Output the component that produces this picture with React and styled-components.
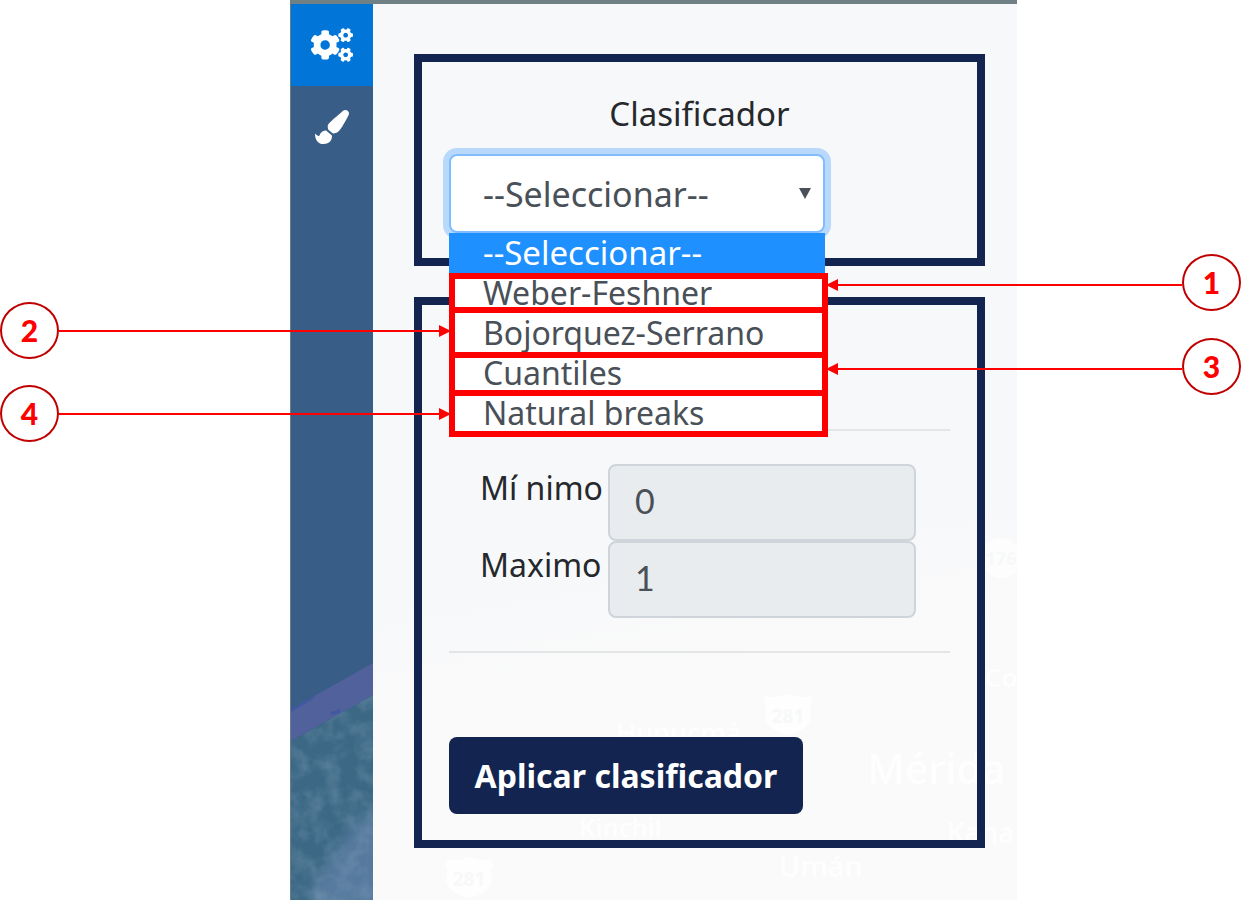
import React from "react";
import styled, { createGlobalStyle } from "styled-components";
import { FaCogs, FaPaintBrush } from "react-icons/fa";

const navy = "#12244f";
const red = "#ff0000";

const GlobalStyle = createGlobalStyle`
  *, *::before, *::after { box-sizing: border-box; }
  body { margin: 0; background: #fff; font-family: "Noto Sans", "Open Sans", sans-serif; }
`;

const Page = styled.div`
  position: relative;
  display: grid;
  grid-template-columns: 290px minmax(0, 1fr) 224px;
  min-height: 100vh;
`;

const AppFrame = styled.div`
  grid-column: 2;
  display: flex;
  min-width: 570px;
  border-top: 4px solid #6f8184;
  border-left: 1px solid #66808a;
`;

const Sidebar = styled.nav`
  position: relative;
  flex: 0 0 82px;
  background: #385d86;
  overflow: hidden;
`;

const SidebarMap = styled.svg`
  position: absolute;
  left: 0;
  bottom: 0;
  width: 82px;
  height: 260px;
`;

const Tab = styled.button`
  display: flex;
  align-items: center;
  justify-content: center;
  width: 100%;
  height: 82px;
  padding: 0;
  border: 0;
  border-top-left-radius: 3px;
  color: #fff;
  background: ${(p) => (p.$active ? "#0275d8" : "transparent")};
  font-size: 34px;
  cursor: pointer;
`;

const Content = styled.main`
  position: relative;
  flex: 1;
  display: flex;
  flex-direction: column;
  gap: 31px;
  padding: 50px 32px 52px 41px;
  background: linear-gradient(170deg, #f7f8fa 60%, #fafafa 72%);
`;

const ContentMap = styled.svg`
  position: absolute;
  right: 0;
  bottom: 0;
  width: 644px;
  height: 500px;
`;

const Card = styled.section`
  position: relative;
  z-index: ${(p) => (p.$raised ? 2 : 1)};
  padding: ${(p) => (p.$raised ? "28px 27px 25px" : "124px 27px 26px")};
  border: 8px solid ${navy};
`;

const CardLabel = styled.label`
  display: block;
  margin-bottom: 16px;
  color: #25282c;
  font-size: 33px;
  line-height: 48px;
  text-align: center;
`;

const SelectField = styled.div`
  position: relative;
  width: 376px;
`;

const Select = styled.select`
  display: block;
  width: 100%;
  height: 79px;
  padding: 0 32px;
  border: 2px solid #80bdff;
  border-radius: 8px;
  outline: none;
  box-shadow: 0 0 0 6px #b8d9fc;
  appearance: none;
  background: #fff;
  color: #495057;
  font-family: inherit;
  font-size: 34px;
`;

const Caret = styled.svg`
  position: absolute;
  top: 34px;
  right: 14px;
  width: 12px;
  height: 11px;
  pointer-events: none;
`;

const Menu = styled.ul`
  position: absolute;
  top: 100%;
  left: 0;
  width: 100%;
  margin: 0;
  padding: 0;
  background: #fff;
  list-style: none;
`;

const Option = styled.li`
  height: 40px;
  padding-left: 34px;
  background: ${(p) => (p.$selected ? "#1e90ff" : "#fff")};
  color: ${(p) => (p.$selected ? "#fff" : "#495057")};
  font-size: ${(p) => (p.$selected ? 33 : 32)}px;
  line-height: 40px;
  white-space: nowrap;
`;

const Marks = styled.div`
  position: absolute;
  top: 119px;
  left: 0;
  width: 379px;
  display: flex;
  flex-direction: column;
  pointer-events: none;
`;

const Mark = styled.div`
  height: ${(p) => p.$height}px;
  border: 6px solid ${red};

  & + & { margin-top: -6px; }
`;

const Divider = styled.hr`
  height: 2px;
  margin: 0;
  border: 0;
  background: #e3e5e6;
`;

const Fields = styled.div`
  display: flex;
  flex-direction: column;
  padding: 33px 34px 33px 31px;
`;

const FieldRow = styled.div`
  display: grid;
  grid-template-columns: 121px minmax(0, 1fr);
  gap: 7px;
`;

const FieldLabel = styled.label`
  color: #25282c;
  font-size: 32px;
  line-height: 48px;
  text-align: right;
  white-space: nowrap;
`;

const Input = styled.input`
  width: 100%;
  height: 77px;
  padding: 0 25px 4px;
  border: 2px solid #ced4da;
  border-radius: 8px;
  background: #e8ecee;
  color: #495057;
  font-family: Lato, sans-serif;
  font-size: 34px;
`;

const ApplyButton = styled.button`
  display: block;
  width: 354px;
  height: 77px;
  margin-top: 84px;
  padding: 0;
  border: 0;
  border-radius: 8px;
  background: ${navy};
  color: #fff;
  font-family: inherit;
  font-size: 32px;
  font-weight: 700;
  white-space: nowrap;
  cursor: pointer;
`;

const Callout = styled.div`
  position: absolute;
  z-index: 5;
  top: ${(p) => p.$top}px;
  ${(p) => (p.$side === "left" ? "left: 0; width: 451px;" : "left: 826px; right: 0;")}
  display: flex;
  flex-direction: ${(p) => (p.$side === "left" ? "row" : "row-reverse")};
  align-items: center;
  pointer-events: none;
`;

const Badge = styled.span`
  flex: none;
  width: 59px;
  height: 57px;
  border: 2px solid #c00000;
  border-radius: 50%;
  background: #fff;
  color: ${red};
  font-family: Lato, sans-serif;
  font-size: 30px;
  font-weight: 900;
  line-height: 53px;
  text-align: center;
`;

const Line = styled.span`
  flex: 1;
  height: 2px;
  margin-top: ${(p) => (p.$side === "left" ? 0 : 4)}px;
  background: ${red};
`;

const Head = styled.span`
  flex: none;
  margin-top: ${(p) => (p.$side === "left" ? 0 : 4)}px;
  border: 6px solid transparent;
  ${(p) =>
    p.$side === "left"
      ? `border-left: 12px solid ${red}; border-right: 0;`
      : `border-right: 12px solid ${red}; border-left: 0;`}
`;

const options = ["--Seleccionar--", "Weber-Feshner", "Bojorquez-Serrano", "Cuantiles", "Natural breaks"];
const markHeights = [40, 51, 44, 47];
const callouts = [
  { n: 1, side: "right", top: 254 },
  { n: 2, side: "left", top: 302 },
  { n: 3, side: "right", top: 338 },
  { n: 4, side: "left", top: 385 },
];

function SidebarTerrain() {
  return (
    <SidebarMap viewBox="0 0 82 260" aria-hidden="true">
      <defs>
        <filter id="soft"><feGaussianBlur stdDeviation="7" /></filter>
        <filter id="grain" x="0" y="0" width="100%" height="100%">
          <feTurbulence type="fractalNoise" baseFrequency="0.06" numOctaves="3" seed="4" />
          <feColorMatrix values="0 0 0 0 0.40  0 0 0 0 0.54  0 0 0 0 0.68  1.6 0 0 0 -0.6" />
        </filter>
        <clipPath id="land"><path d="M0 101 L82 55 V260 H0 Z" /></clipPath>
      </defs>
      <g clipPath="url(#land)">
        <rect width="82" height="260" fill="#3c6885" />
        <path d="M90 165 L60 190 L18 255 L30 270 H90 Z" fill="#567a9e" filter="url(#soft)" />
        <rect width="82" height="260" filter="url(#grain)" opacity="0.3" />
      </g>
      <path d="M0 69 L82 23 V55 L0 101 Z" fill="#50619c" />
      <path d="M0 69 L24 56 L22 59 L0 72 Z M40 72 L50 69 L48 73 L40 75 Z" fill="#4357a0" />
    </SidebarMap>
  );
}

function Shield({ x, y }) {
  return (
    <g transform={`translate(${x} ${y})`}>
      <path d="M2 2 Q12 5 24 0 Q36 5 46 2 L48 8 Q44 15 47 23 Q45 36 24 41 Q3 36 1 23 Q4 15 0 8 Z" fill="#fff" opacity="0.8" />
      <text x="24" y="29" textAnchor="middle" fontSize="19" fontWeight="700" fill="#f7f8f8">281</text>
    </g>
  );
}

function ContentTerrain() {
  return (
    <ContentMap viewBox="0 0 644 500" aria-hidden="true">
      <g fill="#fff" opacity="0.8" fontFamily="Noto Sans, sans-serif" fontWeight="500">
        <text x="243" y="343" fontSize="27">Hunucmá</text>
        <text x="494" y="384" fontSize="41">Mérida</text>
        <text x="206" y="437" fontSize="26">Kinchil</text>
        <text x="406" y="477" fontSize="29">Umán</text>
        <text x="574" y="443" fontSize="28">Kana</text>
        <text x="612" y="287" fontSize="26">Co</text>
      </g>
      <circle cx="628" cy="158" r="20" fill="#fff" opacity="0.7" />
      <text x="628" y="165" textAnchor="middle" fontSize="18" fontWeight="700" fill="#f7f8f8">176</text>
      <Shield x={391} y={294} />
      <Shield x={72} y={457} />
    </ContentMap>
  );
}

export default function App() {
  return (
    <Page>
      <GlobalStyle />
      <AppFrame>
        <Sidebar aria-label="Herramientas">
          <SidebarTerrain />
          <Tab type="button" $active aria-label="Configuración">
            <FaCogs size={42} />
          </Tab>
          <Tab type="button" aria-label="Estilo">
            <FaPaintBrush />
          </Tab>
        </Sidebar>
        <Content>
          <ContentTerrain />
          <Card $raised>
            <CardLabel htmlFor="classifier">Clasificador</CardLabel>
            <SelectField>
              <Select id="classifier" defaultValue={options[0]}>
                {options.map((name) => (
                  <option key={name}>{name}</option>
                ))}
              </Select>
              <Caret viewBox="0 0 12 11" aria-hidden="true">
                <path d="M0 0 H12 L6 11 Z" fill="#495057" />
              </Caret>
              <Menu role="listbox" aria-label="Clasificador">
                {options.map((name, i) => (
                  <Option key={name} role="option" aria-selected={i === 0} $selected={i === 0}>
                    {name}
                  </Option>
                ))}
              </Menu>
              <Marks aria-hidden="true">
                {markHeights.map((height) => (
                  <Mark key={height} $height={height} />
                ))}
              </Marks>
            </SelectField>
          </Card>
          <Card>
            <Divider />
            <Fields>
              <FieldRow>
                <FieldLabel htmlFor="min">Mí nimo</FieldLabel>
                <Input id="min" defaultValue="0" readOnly />
              </FieldRow>
              <FieldRow>
                <FieldLabel htmlFor="max">Maximo</FieldLabel>
                <Input id="max" defaultValue="1" readOnly />
              </FieldRow>
            </Fields>
            <Divider />
            <ApplyButton type="button">Aplicar clasificador</ApplyButton>
          </Card>
        </Content>
      </AppFrame>
      {callouts.map(({ n, side, top }) => (
        <Callout key={n} $side={side} $top={top}>
          <Badge>{n}</Badge>
          <Line $side={side} />
          <Head $side={side} />
        </Callout>
      ))}
    </Page>
  );
}
